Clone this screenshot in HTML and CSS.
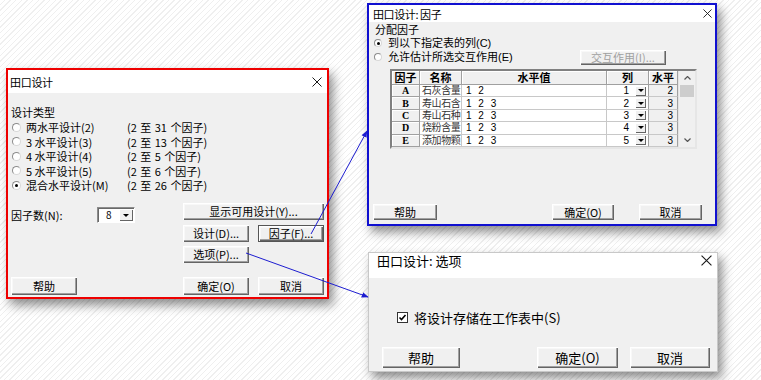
FILE: index.html
```html
<!DOCTYPE html>
<html lang="zh-CN">
<head>
<meta charset="utf-8">
<title>田口设计</title>
<link rel="stylesheet" href="styles.css">
</head>
<body>
<div class="desk">

  <section class="win win-main">
    <header class="titlebar">
      <span class="title">田口设计</span>
      <svg class="close" viewBox="0 0 10 10"><path d="M0.5 0.5L9.5 9.5M9.5 0.5L0.5 9.5"/></svg>
    </header>
    <div class="body">
      <div class="group-label">设计类型</div>
      <div class="radio-list">
        <div class="radio-row"><span class="radio"></span><span class="rlabel">两水平设计(2)</span><span class="range">(2 至 31 个因子)</span></div>
        <div class="radio-row"><span class="radio"></span><span class="rlabel">3 水平设计(3)</span><span class="range">(2 至 13 个因子)</span></div>
        <div class="radio-row"><span class="radio"></span><span class="rlabel">4 水平设计(4)</span><span class="range">(2 至 5 个因子)</span></div>
        <div class="radio-row"><span class="radio"></span><span class="rlabel">5 水平设计(5)</span><span class="range">(2 至 6 个因子)</span></div>
        <div class="radio-row"><span class="radio checked"></span><span class="rlabel">混合水平设计(M)</span><span class="range">(2 至 26 个因子)</span></div>
      </div>
      <div class="middle">
        <div class="count">
          <span class="count-label">因子数(N):</span>
          <div class="combo">
            <span class="combo-val">8</span>
            <span class="combo-btn"><span class="tri"></span></span>
          </div>
        </div>
        <div class="btn-grid">
          <button class="btn span2">显示可用设计(Y)...</button>
          <button class="btn">设计(D)...</button>
          <button class="btn focus">因子(F)...</button>
          <button class="btn">选项(P)...</button>
        </div>
      </div>
      <div class="footer">
        <button class="btn">帮助</button>
        <span class="spacer"></span>
        <button class="btn">确定(O)</button>
        <button class="btn">取消</button>
      </div>
    </div>
  </section>

  <section class="win win-factor">
    <header class="titlebar">
      <span class="title">田口设计: 因子</span>
      <svg class="close" viewBox="0 0 10 10"><path d="M0.5 0.5L9.5 9.5M9.5 0.5L0.5 9.5"/></svg>
    </header>
    <div class="body">
      <div class="group-label">分配因子</div>
      <div class="f-radio r1"><span class="radio checked"></span><span>到以下指定表的列(C)</span></div>
      <div class="f-radio r2"><span class="radio"></span><span>允许估计所选交互作用(E)</span><button class="btn disabled">交互作用(I)...</button></div>
      <div class="grid">
        <div class="hd">因子</div><div class="hd">名称</div><div class="hd">水平值</div><div class="hd">列</div><div class="hd">水平</div>
        <div class="scroll">
          <svg class="chev" viewBox="0 0 7 4"><path d="M0.5 3.5L3.5 0.5L6.5 3.5"/></svg>
          <span class="thumb"></span>
          <span class="track"></span>
          <svg class="chev" viewBox="0 0 7 4"><path d="M0.5 0.5L3.5 3.5L6.5 0.5"/></svg>
        </div>

        <div class="key">A</div><div class="cell name">石灰含量</div><div class="cell vals">1 2</div>
        <div class="cell colsel"><span>1</span><span class="mini-btn"><span class="tri"></span></span></div><div class="lvl">2</div>

        <div class="key">B</div><div class="cell name">寿山石含</div><div class="cell vals">1 2 3</div>
        <div class="cell colsel"><span>2</span><span class="mini-btn"><span class="tri"></span></span></div><div class="lvl">3</div>

        <div class="key">C</div><div class="cell name">寿山石种</div><div class="cell vals">1 2 3</div>
        <div class="cell colsel"><span>3</span><span class="mini-btn"><span class="tri"></span></span></div><div class="lvl">3</div>

        <div class="key">D</div><div class="cell name">烧粉含量</div><div class="cell vals">1 2 3</div>
        <div class="cell colsel"><span>4</span><span class="mini-btn"><span class="tri"></span></span></div><div class="lvl">3</div>

        <div class="key">E</div><div class="cell name">添加物颗</div><div class="cell vals">1 2 3</div>
        <div class="cell colsel"><span>5</span><span class="mini-btn"><span class="tri"></span></span></div><div class="lvl">3</div>
      </div>
      <div class="footer">
        <button class="btn b-help">帮助</button>
        <span class="spacer"></span>
        <button class="btn b-ok">确定(O)</button>
        <button class="btn b-cancel">取消</button>
      </div>
    </div>
  </section>

  <section class="win win-opt">
    <header class="titlebar">
      <span class="title">田口设计: 选项</span>
      <svg class="close" viewBox="0 0 10 10"><path d="M0.5 0.5L9.5 9.5M9.5 0.5L0.5 9.5"/></svg>
    </header>
    <div class="body">
      <label class="check-row">
        <span class="check"><svg viewBox="0 0 9 9"><path d="M1.5 4.5L3.5 6.5L7.5 2"/></svg></span>
        <span>将设计存储在工作表中(S)</span>
      </label>
      <div class="footer">
        <button class="btn b-help">帮助</button>
        <span class="spacer"></span>
        <button class="btn b-ok">确定(O)</button>
        <button class="btn b-cancel">取消</button>
      </div>
    </div>
  </section>

  <svg class="arrows" width="761" height="380" viewBox="0 0 761 380">
    <defs>
      <marker id="ah" viewBox="0 0 10 10" refX="9" refY="5" markerWidth="7" markerHeight="7" orient="auto">
        <path d="M0 1L10 5L0 9Z" fill="#1d1dd0"/>
      </marker>
    </defs>
    <line x1="311" y1="234" x2="367" y2="131" marker-end="url(#ah)"/>
    <line x1="246" y1="253" x2="368" y2="297" marker-end="url(#ah)"/>
  </svg>
</div>
</body>
</html>
```

FILE: styles.css
```css
* { box-sizing: border-box; }

html, body {
  margin: 0;
  padding: 0;
}

body {
  width: 761px;
  height: 380px;
  overflow: hidden;
  font-family: "Noto Sans CJK SC", "Noto Sans", sans-serif;
  font-size: 11px;
  color: #000;
  background: #ffffff repeating-linear-gradient(135deg, #ffffff 0 3px, #efefef 3px 4px);
}

.desk {
  position: relative;
  width: 761px;
  height: 380px;
}

/* ---------- windows ---------- */
.win {
  position: absolute;
  display: flex;
  flex-direction: column;
  background: #f0f0f0;
  box-shadow: 4px 6px 10px rgba(0, 0, 0, 0.45);
}

.titlebar {
  display: flex;
  align-items: center;
  justify-content: space-between;
  background: #fff;
  flex: none;
}

.close {
  fill: none;
  stroke: #1a1a1a;
  stroke-width: 1;
}

.body {
  flex: 1;
  display: flex;
  flex-direction: column;
}

.footer {
  margin-top: auto;
  display: flex;
  align-items: flex-start;
}

.spacer { flex: 1; }

/* ---------- buttons ---------- */
.btn {
  font-family: "Noto Sans CJK SC", "Noto Sans", sans-serif;
  font-size: 11px;
  color: #000;
  background: #f0f0f0;
  border: 0;
  padding: 0;
  margin: 0;
  line-height: 1;
  box-shadow: inset 1px 1px 0 #ffffff, inset -1px -1px 0 #646464, inset -2px -2px 0 #a0a0a0, inset 2px 2px 0 #f8f8f8;
  border-radius: 0;
}

.btn.focus {
  border: 1px solid #555;
}

.btn.disabled {
  color: #a0a0a0;
}

/* ---------- radio ---------- */
.radio {
  display: inline-block;
  flex: none;
  width: 9px;
  height: 9px;
  border-radius: 50%;
  background: #fff;
  border: 1px solid #8c8c8c;
  border-right-color: #d8d8d8;
  border-bottom-color: #d8d8d8;
  position: relative;
}

.radio.checked::after {
  content: "";
  position: absolute;
  left: 2px;
  top: 2px;
  width: 3px;
  height: 3px;
  border-radius: 50%;
  background: #000;
}

.tri {
  display: block;
  width: 0;
  height: 0;
  border-left: 3px solid transparent;
  border-right: 3px solid transparent;
  border-top: 3px solid #000;
}

/* ---------- main dialog ---------- */
.win-main {
  left: 6px;
  top: 68px;
  width: 323px;
  height: 231px;
  border: 2px solid #ee0000;
}

.win-main .titlebar {
  height: 23px;
  padding: 0 5px 0 2px;
}

.win-main .title {
  font-size: 11px;
  letter-spacing: -0.3px;
}

.win-main .close {
  width: 10px;
  height: 10px;
}

.win-main .body {
  padding: 12px 3px 2px 3px;
}

.win-main .group-label {
  line-height: 14px;
  height: 14px;
  margin-bottom: 1px;
}

.radio-row {
  display: flex;
  align-items: center;
  height: 14.5px;
  white-space: pre;
}

.radio-row .radio {
  margin-left: 1px;
  margin-right: 5px;
}

.rlabel {
  width: 101px;
}

.range {
  word-spacing: 1px;
}

.middle {
  display: flex;
  margin-top: 10.5px;
}

.count {
  width: 172px;
  display: flex;
  align-items: center;
  height: 16px;
  margin-top: 4px;
}

.count-label {
  width: 86px;
}

.combo {
  display: flex;
  align-items: center;
  width: 38px;
  height: 16px;
  background: #fff;
  border: 1px solid;
  border-color: #8c8c8c #fff #fff #8c8c8c;
  box-shadow: inset 1px 1px 0 #696969;
  padding: 1px 1px 1px 8px;
}

.combo-val {
  flex: 1;
  font-size: 10px;
  line-height: 12px;
}

.combo-btn {
  width: 14px;
  height: 12px;
  display: flex;
  align-items: center;
  justify-content: center;
  background: #f0f0f0;
  box-shadow: inset 1px 1px 0 #fff, inset -1px -1px 0 #646464;
}

.btn-grid {
  display: grid;
  grid-template-columns: 66px 66px;
  grid-auto-rows: 17px;
  column-gap: 9px;
  row-gap: 4.5px;
}

.btn-grid .span2 {
  grid-column: 1 / 3;
}

.win-main .footer {
  gap: 9px;
}

.win-main .footer .btn {
  width: 66px;
  height: 18px;
}

.win-main .footer .spacer {
  margin-right: -9px;
}

/* ---------- factor dialog ---------- */
.win-factor {
  left: 367px;
  top: 3px;
  width: 350px;
  height: 223px;
  border: 2px solid #1010d0;
}

.win-factor .titlebar {
  height: 17px;
  padding: 0 3px 0 4px;
}

.win-factor .title {
  font-size: 11px;
  letter-spacing: -0.4px;
}

.win-factor .close {
  width: 9px;
  height: 9px;
}

.win-factor .body {
  padding: 1px 13px 4px 6px;
}

.win-factor .group-label {
  font-family: "Liberation Sans", "Noto Sans CJK SC", sans-serif;
  line-height: 14px;
  height: 14px;
}

.f-radio {
  font-family: "Liberation Sans", "Noto Sans CJK SC", sans-serif;
  display: flex;
  align-items: center;
  line-height: 12px;
}

.f-radio .radio {
  width: 8px;
  height: 8px;
  margin-left: -1px;
  margin-right: 6px;
}

.f-radio .radio.checked::after {
  left: 1.5px;
  top: 1.5px;
}

.f-radio.r1 { height: 12px; }
.f-radio.r2 { height: 16px; }

.f-radio .btn {
  margin-left: auto;
  margin-right: 36px;
  width: 86px;
  height: 15px;
}

.grid {
  margin-top: 4px;
  margin-left: 15px;
  width: 307px;
  height: 80px;
  display: grid;
  grid-template-columns: 28px 42px 145px 42px 29px 17px;
  grid-template-rows: 14px repeat(5, 12.4px);
  border: 2px solid;
  border-color: #808080 #e6e6e6 #e6e6e6 #808080;
  background: #f0f0f0;
}

.hd {
  font-weight: bold;
  font-size: 11px;
  display: flex;
  align-items: center;
  justify-content: center;
  border-right: 1px solid #a0a0a0;
  border-bottom: 1px solid #a0a0a0;
  box-shadow: inset 1px 1px 0 #fff;
  line-height: 13px;
}

.scroll {
  grid-column: 6;
  grid-row: 1 / 7;
  display: flex;
  flex-direction: column;
  align-items: center;
  background: #f0f0f0;
  border-left: 1px solid #e4e4e4;
}

.chev {
  width: 7px;
  height: 4px;
  fill: none;
  stroke: #555;
  stroke-width: 1.2;
  margin: 5px 0;
  flex: none;
}

.thumb {
  width: 14px;
  height: 12px;
  background: #cdcdcd;
  flex: none;
}

.track { flex: 1; }

.key {
  font-family: "Liberation Serif", serif;
  font-weight: bold;
  font-size: 10px;
  line-height: 11px;
  display: flex;
  align-items: center;
  justify-content: center;
  border-right: 1px solid #a0a0a0;
  border-bottom: 1px solid #a0a0a0;
  box-shadow: inset 1px 1px 0 #fff;
  background: #f0f0f0;
}

.cell {
  font-family: "Liberation Sans", "Noto Sans CJK SC", sans-serif;
  background: #fff;
  border-right: 1px solid #c8c8c8;
  border-bottom: 1px solid #c8c8c8;
  font-size: 10px;
  line-height: 11px;
  display: flex;
  align-items: center;
  white-space: pre;
}

.name {
  padding-left: 2px;
  color: #333;
  letter-spacing: -0.4px;
}

.vals {
  padding-left: 4px;
  word-spacing: 4px;
}

.colsel {
  justify-content: flex-end;
  padding-right: 2px;
  border-right-color: #a0a0a0;
}

.colsel > span:first-child {
  margin-right: 6px;
}

.mini-btn {
  width: 11px;
  height: 10px;
  display: flex;
  align-items: center;
  justify-content: center;
  background: #f0f0f0;
  box-shadow: inset 1px 1px 0 #fff, inset -1px -1px 0 #646464;
}

.mini-btn .tri {
  border-left-width: 3px;
  border-right-width: 3px;
  border-top-width: 3px;
}

.lvl {
  font-family: "Liberation Sans", sans-serif;
  background: #f0f0f0;
  border-right: 1px solid #a0a0a0;
  border-bottom: 1px solid #c8c8c8;
  font-size: 10px;
  line-height: 11px;
  display: flex;
  align-items: center;
  justify-content: flex-end;
  padding-right: 4px;
}

.win-factor .footer .btn { height: 16px; }
.win-factor .b-help { width: 64px; margin-left: -2px; }
.win-factor .b-ok { width: 62px; margin-right: 25px; }
.win-factor .b-cancel { width: 63px; }

/* ---------- options dialog ---------- */
.win-opt {
  left: 368px;
  top: 252px;
  width: 350px;
  height: 120px;
  border: 1px solid #c8c8c8;
}

.win-opt .titlebar {
  height: 25px;
  align-items: flex-start;
  padding: 0 5px 0 8px;
}

.win-opt .title {
  font-size: 13px;
  line-height: 16px;
  padding-top: 0px;
}

.win-opt .close {
  width: 11px;
  height: 11px;
  margin-top: 2px;
}

.win-opt .body {
  padding: 32px 7px 3px 13px;
}

.check-row {
  display: flex;
  align-items: center;
  height: 15px;
  margin-left: 15px;
  font-size: 13px;
  line-height: 15px;
}

.check {
  width: 11px;
  height: 11px;
  background: #fff;
  border: 1px solid #333;
  margin-right: 6px;
  display: flex;
}

.check svg {
  width: 9px;
  height: 9px;
  fill: none;
  stroke: #000;
  stroke-width: 1.6;
}

.win-opt .btn {
  font-size: 13px;
  height: 21px;
}

.win-opt .b-help { width: 78px; }
.win-opt .b-ok { width: 81px; margin-right: 12px; }
.win-opt .b-cancel { width: 80px; }

/* ---------- connectors ---------- */
.arrows {
  position: absolute;
  left: 0;
  top: 0;
  pointer-events: none;
}

.arrows line {
  stroke: #1d1dd0;
  stroke-width: 1;
}
```
